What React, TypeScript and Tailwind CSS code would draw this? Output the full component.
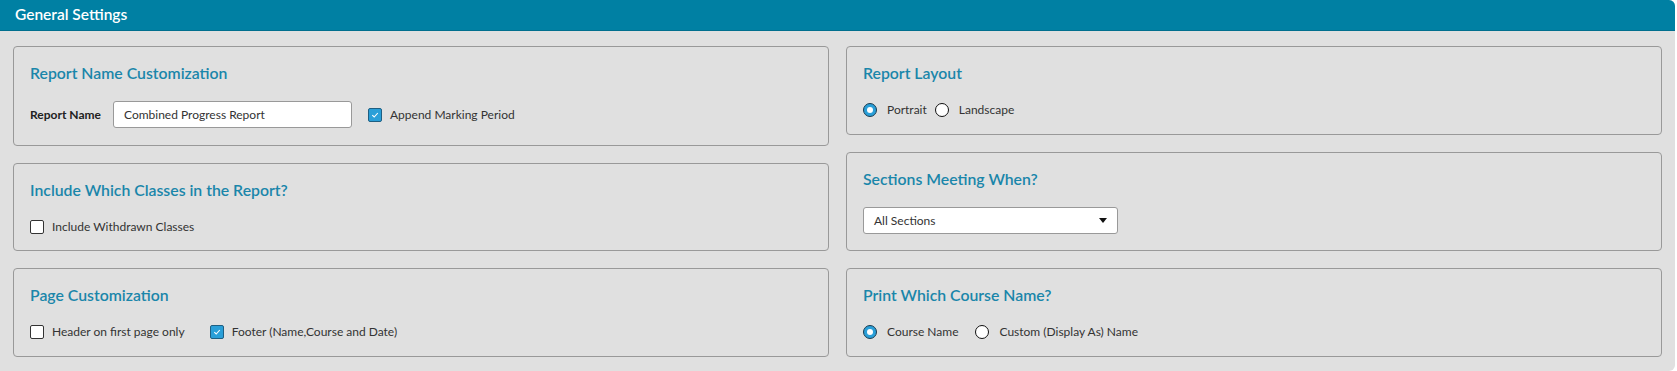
import React from 'react';

const Box: React.FC<{ title: string; h: string; children: React.ReactNode }> = ({ title, h, children }) => (
  <div className={`border border-[#999999] rounded-[4px] bg-[#e0e0e0] pl-[16px] pt-[14px] ${h}`}>
    <h3 className="text-[15.8px] leading-[24px] font-semibold text-[#1a86aa]">{title}</h3>
    {children}
  </div>
);

const Check: React.FC<{ checked?: boolean; label: string }> = ({ checked, label }) => (
  <label className="flex items-center gap-[8px]">
    {checked ? (
      <span className="w-[14px] h-[14px] rounded-[2px] border border-[#1f5f82] bg-[#2a9fd8] flex items-center justify-center">
        <svg width="8" height="8" viewBox="0 0 8 8">
          <path d="M1.3 4.2 L3.2 6 L6.8 2" fill="none" stroke="white" strokeWidth="1.1" />
        </svg>
      </span>
    ) : (
      <span className="w-[14px] h-[14px] rounded-[2px] border border-[#333333] bg-white" />
    )}
    <span className="text-[#333333]">{label}</span>
  </label>
);

const Radio: React.FC<{ checked?: boolean; label: string }> = ({ checked, label }) => (
  <label className="flex items-center gap-[10px]">
    {checked ? (
      <span className="w-[14px] h-[14px] rounded-full border border-[#1a3c50] bg-[#2a9fd8] flex items-center justify-center">
        <span className="w-[6px] h-[6px] rounded-full bg-white" />
      </span>
    ) : (
      <span className="w-[14px] h-[14px] rounded-full border border-[#111111] bg-white" />
    )}
    <span className="text-[#333333]">{label}</span>
  </label>
);

export default function App() {
  return (
    <div className="w-[1675px] bg-[#e0e0e0] rounded-r-[6px] overflow-hidden text-[12px]" style={{ fontFamily: 'Lato, "Noto Sans", sans-serif' }}>
      <div className="h-[31px] bg-[#0080a3] border-b border-[#006f8e] flex items-center pl-[15px]">
        <span className="text-white text-[15.5px] font-semibold">General Settings</span>
      </div>
      <div className="grid grid-cols-2 gap-x-[17px] pl-[13px] pr-[13px] pt-[15px] pb-[14px]">
        <div className="flex flex-col gap-[17px]">
          <Box title="Report Name Customization" h="h-[100px]">
            <div className="mt-[16px] h-[27px] flex items-center">
              <span className="font-bold text-[#222222] w-[83px]">Report Name</span>
              <div className="w-[239px] h-[27px] bg-white border border-[#999999] rounded-[3px] flex items-center pl-[10px] text-[#333333]">
                Combined Progress Report
              </div>
              <div className="ml-[16px]">
                <Check checked label="Append Marking Period" />
              </div>
            </div>
          </Box>
          <Box title="Include Which Classes in the Report?" h="h-[88px]">
            <div className="mt-[15px] h-[20px] flex items-center">
              <Check label="Include Withdrawn Classes" />
            </div>
          </Box>
          <Box title="Page Customization" h="h-[89px]">
            <div className="mt-[15px] h-[20px] flex items-center gap-[25px]">
              <Check label="Header on first page only" />
              <Check checked label="Footer (Name,Course and Date)" />
            </div>
          </Box>
        </div>
        <div className="flex flex-col gap-[17px]">
          <Box title="Report Layout" h="h-[89px]">
            <div className="mt-[15px] h-[20px] flex items-center gap-[8px]">
              <Radio checked label="Portrait" />
              <Radio label="Landscape" />
            </div>
          </Box>
          <Box title="Sections Meeting When?" h="h-[99px]">
            <div className="mt-[16px] w-[255px] h-[27px] bg-white border border-[#999999] rounded-[3px] flex items-center justify-between pl-[10px] pr-[10px] text-[#333333]">
              <span>All Sections</span>
              <svg width="8" height="5" viewBox="0 0 8 5">
                <path d="M0 0 L8 0 L4 5 Z" fill="#111111" />
              </svg>
            </div>
          </Box>
          <Box title="Print Which Course Name?" h="h-[89px]">
            <div className="mt-[15px] h-[20px] flex items-center gap-[17px]">
              <Radio checked label="Course Name" />
              <Radio label="Custom (Display As) Name" />
            </div>
          </Box>
        </div>
      </div>
    </div>
  );
}
